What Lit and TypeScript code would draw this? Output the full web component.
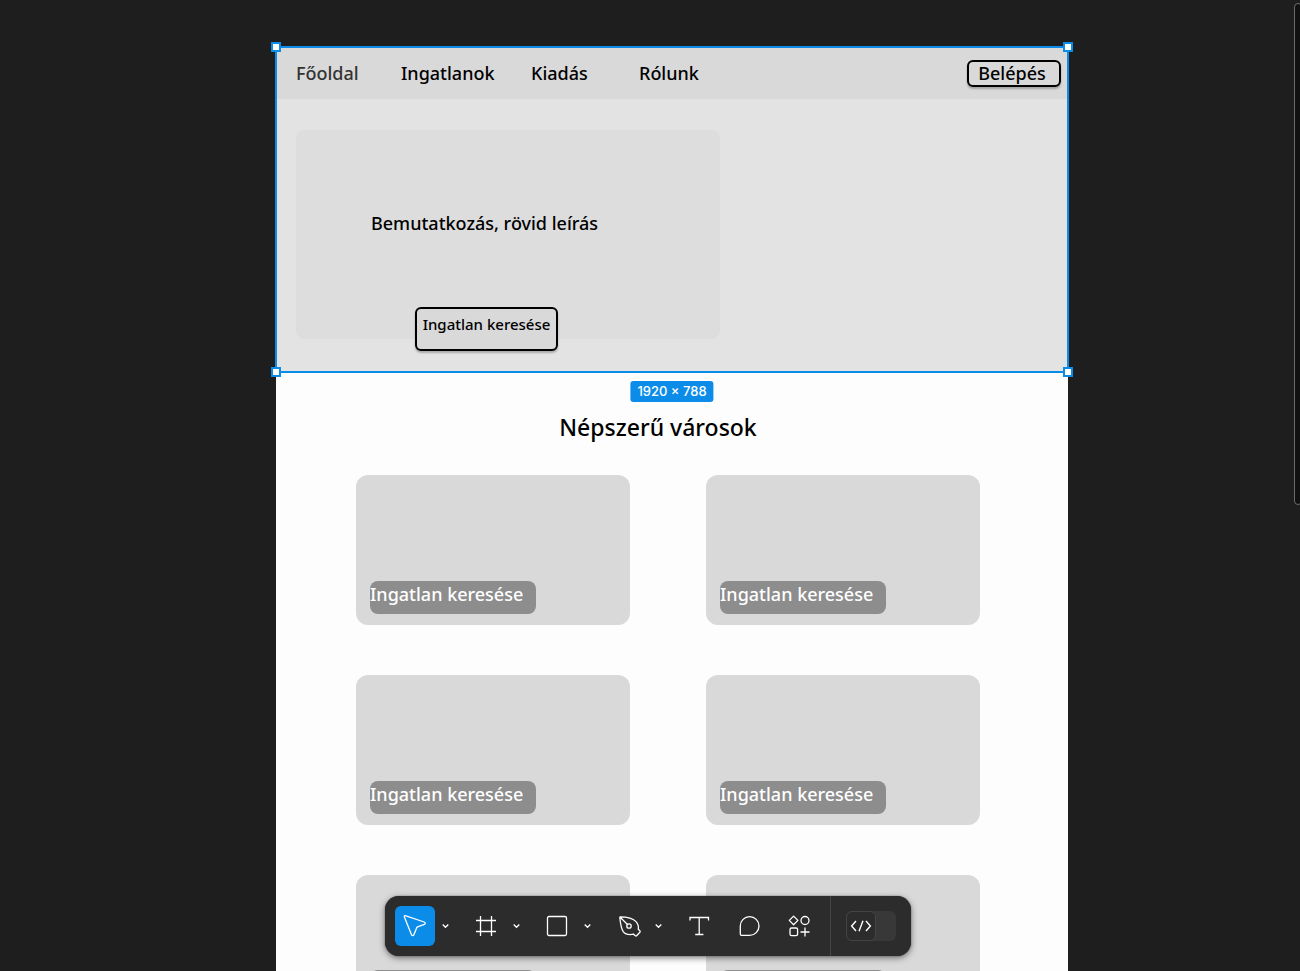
import { LitElement, html, css, svg } from "lit";
import { customElement, property } from "lit/decorators.js";
import { classMap } from "lit/directives/class-map.js";

const icons: Record<string, unknown> = {
  move: svg`<path d="M6.2 5.6 L25.2 12 C26.6 12.6 26.6 13.8 25.3 14.4 L18.6 16.8 C18.2 17 18 17.2 17.8 17.6 L14.9 24.8 C14.4 26 13 26 12.5 24.8 L5.4 6.9 C5 5.9 5.4 5.4 6.2 5.6 Z"/>`,
  frame: svg`<path d="M10.5 6V26M21.5 6V26M6 10.5H26M6 21.5H26"/>`,
  rectangle: svg`<rect x="6.5" y="6.5" width="19" height="19" rx="1.5"/>`,
  pen: svg`<path d="M8.4 6.9 C14 7 20.4 8 23.8 11.4 C26 13.8 26.7 17 26.3 19.2 L27.9 20.8 C28.3 21.3 28.3 21.8 27.9 22.2 L24.6 25.8 C24.2 26.2 23.7 26.2 23.3 25.8 L21.6 24.2 C17.8 24.9 13.4 24.4 11.2 21.6 C8.9 18.2 8.3 12.4 7.8 7.5 C7.8 7.1 8 6.9 8.4 6.9 Z M8.2 7.2 L15.5 14.5"/><circle cx="17" cy="16" r="2.2"/>`,
  text: svg`<path d="M7 10.5V7.5H25.5V10.5M16.2 7.5V24.5M12.2 24.5H20.4"/>`,
  comment: svg`<path d="M16.6 6.6 A9.4 9.4 0 0 1 16.6 25.4 H8.6 C7.8 25.4 7.3 24.9 7.3 24.1 V16 A9.3 9.4 0 0 1 16.6 6.6 Z"/>`,
  resources: svg`<path d="M10.6 6.1 L14.9 10.4 L10.6 14.7 L6.3 10.4 Z M22 17.5V26.5M17.5 22H26.5" stroke-linejoin="round"/><circle cx="22" cy="10.5" r="4"/><rect x="7" y="18" width="7.6" height="7.6" rx="1.6"/>`,
};

interface Tool {
  id: string;
  label: string;
  menu: boolean;
}

const tools: Tool[] = [
  { id: "move", label: "Move", menu: true },
  { id: "frame", label: "Frame", menu: true },
  { id: "rectangle", label: "Rectangle", menu: true },
  { id: "pen", label: "Pen", menu: true },
  { id: "text", label: "Text", menu: false },
  { id: "comment", label: "Comment", menu: false },
  { id: "resources", label: "Resources", menu: false },
];

@customElement("editor-toolbar")
export class EditorToolbar extends LitElement {
  @property() active = "move";

  static styles = css`
    :host {
      display: flex;
      box-sizing: border-box;
      align-items: center;
      gap: 10px;
      height: 60px;
      padding: 0 15px 0 10px;
      border-radius: 14px;
      background: #2c2c2c;
      box-shadow: 0 2px 6px rgba(0, 0, 0, 0.5), 0 0 1px rgba(0, 0, 0, 0.8);
    }
    button {
      display: grid;
      place-items: center;
      margin: 0;
      padding: 0;
      border: 0;
      background: none;
      color: #fff;
    }
    svg {
      display: block;
      fill: none;
      stroke: currentColor;
    }
    .group {
      display: flex;
    }
    .tool {
      width: 40px;
      height: 40px;
      border-radius: 6px;
    }
    .tool svg {
      width: 32px;
      height: 32px;
      stroke-width: 1.3;
    }
    .active {
      background: #0c8ce9;
    }
    .more {
      width: 21px;
      height: 40px;
    }
    .divider {
      width: 1px;
      height: 60px;
      margin: 0 5px 0 1px;
      background: #454545;
    }
    .switch {
      display: flex;
      align-items: center;
      width: 50px;
      height: 30px;
      border-radius: 6px;
      background: #383838;
    }
    .thumb {
      display: grid;
      place-items: center;
      box-sizing: border-box;
      width: 30px;
      height: 30px;
      border: 1px solid #444;
      border-radius: 6px;
      background: #2c2c2c;
    }
  `;

  render() {
    return html`
      ${tools.map(
        (t) => html`<div class="group">
          <button
            class=${classMap({ tool: true, active: t.id === this.active })}
            aria-label=${t.label}
            @click=${() => (this.active = t.id)}
          >
            <svg viewBox="0 0 32 32">${icons[t.id]}</svg>
          </button>
          ${t.menu
            ? html`<button class="more" aria-label="${t.label} options">
                <svg width="9" height="6" viewBox="0 0 9 6" stroke-width="1.3">
                  <path d="M1.7 1.5 L4.5 4.3 L7.3 1.5" />
                </svg>
              </button>`
            : ""}
        </div>`
      )}
      <div class="divider"></div>
      <button class="switch" role="switch" aria-checked="false" aria-label="Dev Mode">
        <span class="thumb">
          <svg width="22" height="14" viewBox="0 0 22 14" stroke-width="1.4">
            <path d="M6 2 L1.6 7 L6 12 M16 2 L20.4 7 L16 12 M13 1.8 L9 12.2" />
          </svg>
        </span>
      </button>
    `;
  }
}

@customElement("city-card")
export class CityCard extends LitElement {
  @property() label = "";
  @property({ type: Boolean }) raised = false;

  static styles = css`
    :host {
      display: flex;
      align-items: flex-end;
      box-sizing: border-box;
      height: 150px;
      padding: 0 14px 11px;
      border-radius: 12px;
      background: #d9d9d9;
    }
    :host([raised]) {
      padding-bottom: 22px;
    }
    button {
      width: 166px;
      height: 33px;
      padding: 0 0 6px;
      border: 0;
      border-radius: 8px;
      background: #8d8d8d;
      color: #fff;
      font: 500 18px/27px "Noto Sans", sans-serif;
      text-align: left;
      white-space: nowrap;
    }
  `;

  render() {
    return html`<button>${this.label}</button>`;
  }
}

@customElement("app-root")
export class AppRoot extends LitElement {
  static styles = css`
    :host {
      display: block;
      position: relative;
      box-sizing: border-box;
      height: 100vh;
      overflow: hidden;
      padding: 47px 232px 0 276px;
      background: #1e1e1e;
      color: #000;
      font: 500 18px/26px "Noto Sans", sans-serif;
    }
    .page {
      background: #fdfdfd;
    }
    .hero {
      position: relative;
      box-sizing: border-box;
      height: 325px;
      background: #e3e3e3;
    }
    .nav {
      display: grid;
      grid-template-columns: 105px 130px 108px 1fr auto;
      align-items: center;
      height: 52px;
      padding: 0 7px 0 20px;
      background: #d9d9d9;
    }
    .nav a {
      color: inherit;
      text-decoration: none;
    }
    .nav .current {
      color: #333;
    }
    .outlined {
      box-sizing: border-box;
      border: 2px solid #000;
      border-radius: 6px;
      background: #d9d9d9;
      color: #000;
      box-shadow: 0 2px 2px rgba(0, 0, 0, 0.25);
      white-space: nowrap;
    }
    .login {
      grid-column: 5;
      width: 94px;
      height: 27px;
      padding: 0 4px 0 0;
      font: inherit;
      line-height: 23px;
    }
    .intro {
      display: flex;
      flex-direction: column;
      justify-content: space-between;
      box-sizing: border-box;
      width: 424px;
      height: 209px;
      margin: 31px 0 0 20px;
      padding: 80px 0 0 75px;
      border-radius: 8px;
      background: #ddd;
    }
    .intro p {
      margin: 0;
    }
    .search {
      width: 143px;
      height: 44px;
      margin: 0 0 -12px 44px;
      padding: 0 0 10px;
      font: 500 15px/20px "Noto Sans", sans-serif;
    }
    .selection {
      position: absolute;
      inset: -1px;
      border: 2px solid #0c8ce9;
      pointer-events: none;
    }
    .handle {
      position: absolute;
      box-sizing: border-box;
      width: 10px;
      height: 10px;
      border: 2px solid #0c8ce9;
      background: #fff;
    }
    .tl { top: -6px; left: -6px; }
    .tr { top: -6px; right: -6px; }
    .bl { bottom: -6px; left: -6px; }
    .br { bottom: -6px; right: -6px; }
    .size {
      position: absolute;
      top: 100%;
      left: 50%;
      transform: translateX(-50%);
      margin-top: 9px;
      padding: 0 7px;
      border-radius: 3px;
      background: #0c8ce9;
      color: #fff;
      font: 500 13px/21px Inter, sans-serif;
      white-space: nowrap;
    }
    h2 {
      margin: 0;
      padding: 37px 28px 30px 0;
      font-size: 23px;
      line-height: 36px;
      font-weight: 500;
      text-align: center;
    }
    .cities {
      display: grid;
      grid-template-columns: 1fr 1fr;
      gap: 50px 76px;
      padding: 0 88px 50px 80px;
    }
    .dock {
      position: absolute;
      inset: auto 4px 15px 0;
      display: flex;
      justify-content: center;
    }
    .scrollbar {
      position: absolute;
      top: 3px;
      right: -2px;
      bottom: 48%;
      box-sizing: border-box;
      width: 8px;
      border: 1px solid #6b6b6b;
      border-radius: 4px;
      background: #111;
    }
  `;

  render() {
    return html`
      <main class="page">
        <section class="hero">
          <nav class="nav">
            <a class="current" href="#">Főoldal</a>
            <a href="#">Ingatlanok</a>
            <a href="#">Kiadás</a>
            <a href="#">Rólunk</a>
            <button class="outlined login">Belépés</button>
          </nav>
          <div class="intro">
            <p>Bemutatkozás, rövid leírás</p>
            <button class="outlined search">Ingatlan keresése</button>
          </div>
          <div class="selection">
            <i class="handle tl"></i><i class="handle tr"></i>
            <i class="handle bl"></i><i class="handle br"></i>
          </div>
          <span class="size">1920 × 788</span>
        </section>
        <h2>Népszerű városok</h2>
        <section class="cities">
          ${[0, 1, 2, 3].map(() => html`<city-card label="Ingatlan keresése"></city-card>`)}
          <city-card raised></city-card>
          <city-card raised></city-card>
        </section>
      </main>
      <div class="scrollbar"></div>
      <div class="dock"><editor-toolbar></editor-toolbar></div>
    `;
  }
}
